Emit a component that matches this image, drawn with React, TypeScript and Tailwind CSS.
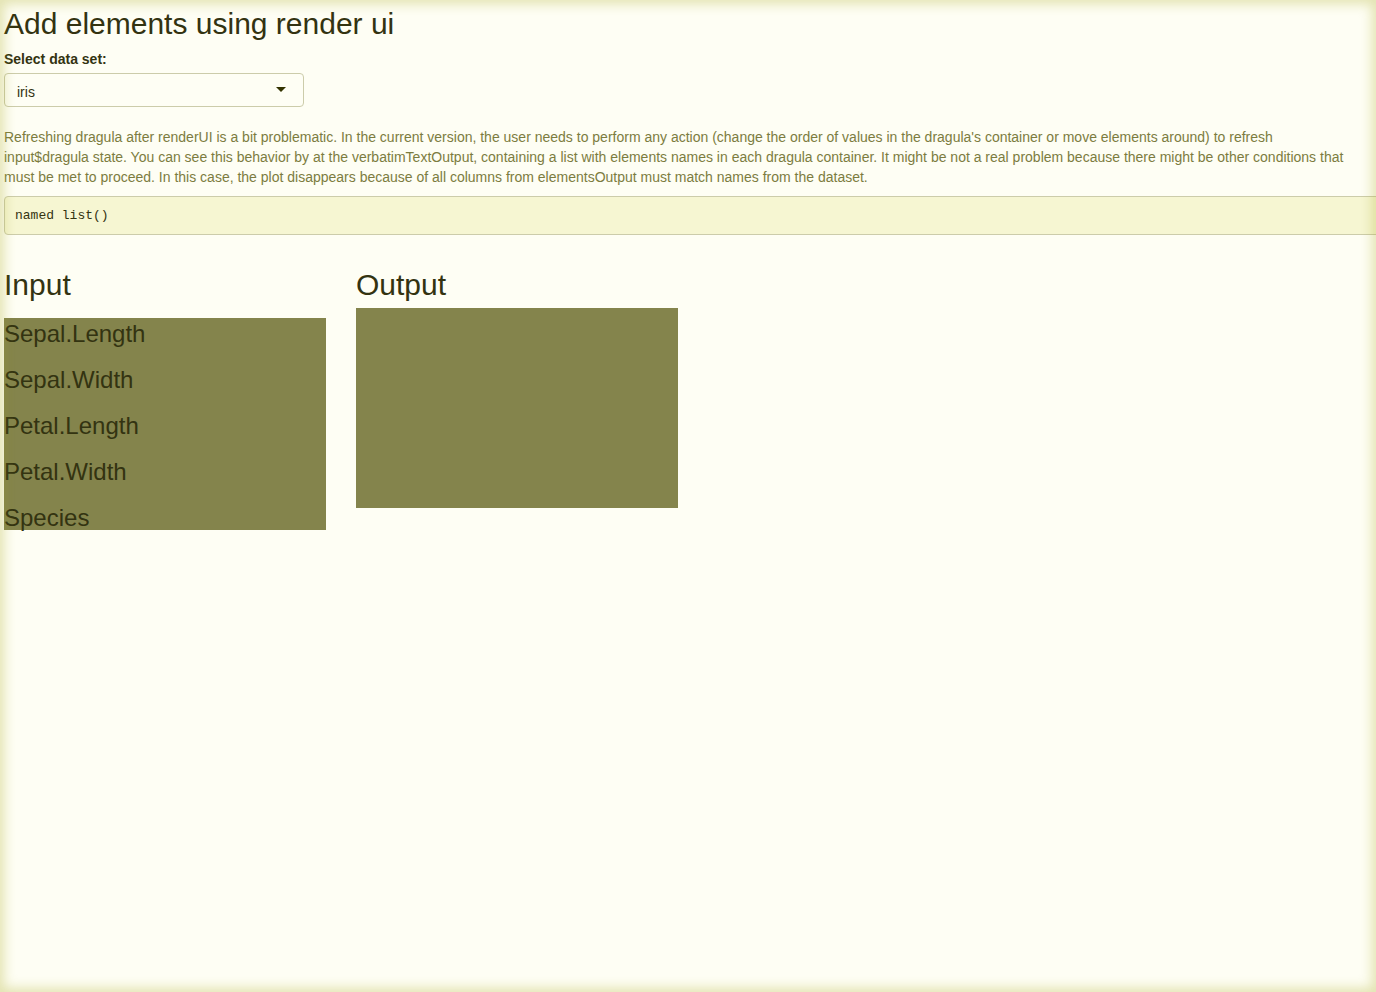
import React from "react";

const columns = ["Sepal.Length", "Sepal.Width", "Petal.Length", "Petal.Width", "Species"];
const dataSets = ["iris", "mtcars"];

export default function App() {
  return (
    <div className="relative min-h-screen overflow-hidden bg-[#fefef4] pl-1 pt-[7px] font-['Liberation_Sans',Arial,sans-serif] text-sm leading-5 text-[#333311]">
      <main className="-mr-1.5">
        <h1 className="text-[30px] leading-[33px]">Add elements using render ui</h1>
        <div className="mt-[9px]">
          <label htmlFor="dataset" className="block font-bold">
            Select data set:
          </label>
          <div className="relative mt-1 w-[300px]">
            <select
              id="dataset"
              defaultValue="iris"
              className="h-[34px] w-full appearance-none rounded border border-[#ccccaa] bg-[#fefef4] px-3 pt-1 text-sm"
            >
              {dataSets.map((name) => (
                <option key={name}>{name}</option>
              ))}
            </select>
            <svg
              className="pointer-events-none absolute right-[18px] top-[14px]"
              width="10"
              height="5"
              viewBox="0 0 10 5"
              aria-hidden="true"
            >
              <path d="M0 0h10L5 5z" fill="#333300" />
            </svg>
          </div>
        </div>
        <p className="mt-5 text-[#7c7c40]">
          Refreshing dragula after renderUI is a bit problematic. In the current version, the user needs to perform any
          action (change the order of values in the dragula's container or move elements around) to refresh
          <br />
          input$dragula state. You can see this behavior by at the verbatimTextOutput, containing a list with elements
          names in each dragula container. It might be not a real problem because there might be other conditions that
          <br />
          must be met to proceed. In this case, the plot disappears because of all columns from elementsOutput must match
          names from the dataset.
        </p>
        <pre className="mt-[9px] rounded border border-[#ccccaa] bg-[#f6f6d2] px-2.5 py-[9px] font-['Liberation_Mono','Courier_New',monospace] text-[13px] leading-[19px]">
          named list()
        </pre>
        <div className="mt-[33px] grid grid-cols-4 gap-[30px]">
          <section>
            <h2 className="text-[30px] leading-[33px]">Input</h2>
            <div className="mt-[17px] flex h-[212px] flex-col gap-5 bg-[#84844c] pt-[3px]">
              {columns.map((name) => (
                <h3 key={name} className="shrink-0 cursor-grab text-2xl leading-[26px]">
                  {name}
                </h3>
              ))}
            </div>
          </section>
          <section>
            <h2 className="text-[30px] leading-[33px]">Output</h2>
            <div className="mt-[7px] h-[200px] bg-[#84844c]" />
          </section>
        </div>
      </main>
      <div className="pointer-events-none absolute inset-0 shadow-[inset_0_0_12px_4px_#a8a82050]" />
    </div>
  );
}
